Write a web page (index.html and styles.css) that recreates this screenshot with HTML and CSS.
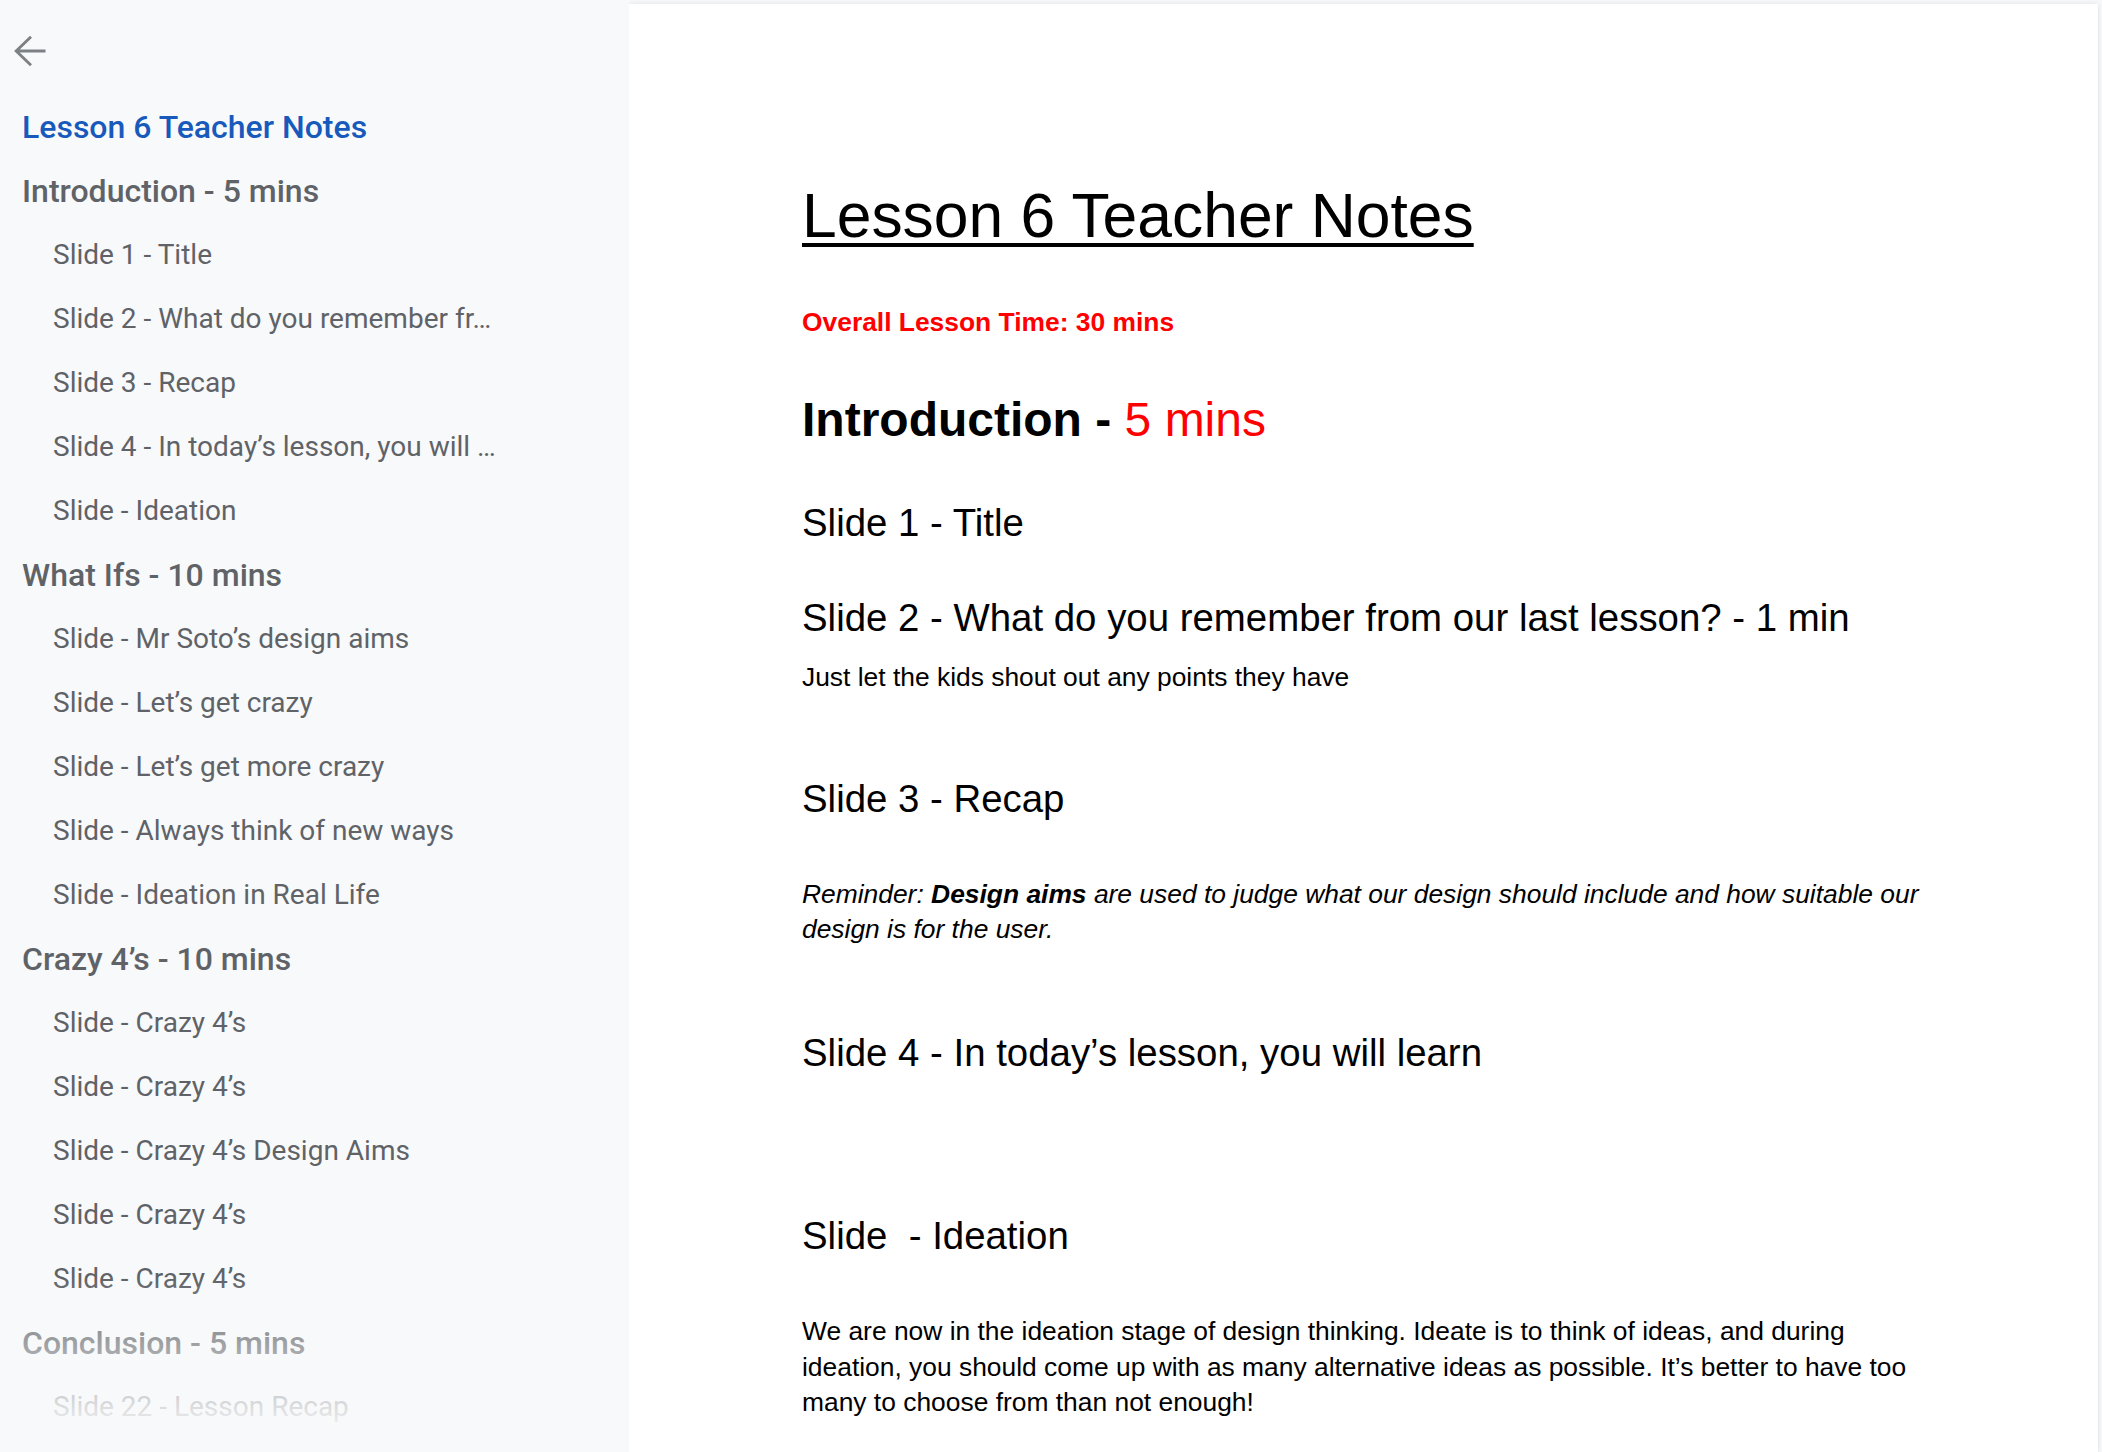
FILE: index.html
```html
<!DOCTYPE html>
<html lang="en">
<head>
<meta charset="utf-8">
<title>Lesson 6 Teacher Notes</title>
<link rel="stylesheet" href="styles.css">
</head>
<body>
<div class="app">
  <aside class="sidebar">
    <div class="back">
      <svg class="back-icon" width="32" height="32" viewBox="0 0 32 32" aria-hidden="true">
        <path d="M17 1.8 L2.2 16 L17 30.2 M2.2 16 H31.5" fill="none" stroke="#7d8186" stroke-width="2.9" stroke-linejoin="miter"/>
      </svg>
    </div>
    <nav class="toc">
      <div class="toc-row toc-title">Lesson 6 Teacher Notes</div>
      <div class="toc-row toc-head">Introduction - 5 mins</div>
      <div class="toc-row toc-item">Slide 1 - Title</div>
      <div class="toc-row toc-item">Slide 2 - What do you remember fr…</div>
      <div class="toc-row toc-item">Slide 3 - Recap</div>
      <div class="toc-row toc-item">Slide 4 - In today’s lesson, you will …</div>
      <div class="toc-row toc-item">Slide - Ideation</div>
      <div class="toc-row toc-head">What Ifs - 10 mins</div>
      <div class="toc-row toc-item">Slide - Mr Soto’s design aims</div>
      <div class="toc-row toc-item">Slide - Let’s get crazy</div>
      <div class="toc-row toc-item">Slide - Let’s get more crazy</div>
      <div class="toc-row toc-item">Slide - Always think of new ways</div>
      <div class="toc-row toc-item">Slide - Ideation in Real Life</div>
      <div class="toc-row toc-head">Crazy 4’s - 10 mins</div>
      <div class="toc-row toc-item">Slide - Crazy 4’s</div>
      <div class="toc-row toc-item">Slide - Crazy 4’s</div>
      <div class="toc-row toc-item">Slide - Crazy 4’s Design Aims</div>
      <div class="toc-row toc-item">Slide - Crazy 4’s</div>
      <div class="toc-row toc-item">Slide - Crazy 4’s</div>
      <div class="toc-row toc-head">Conclusion - 5 mins</div>
      <div class="toc-row toc-item">Slide 22 - Lesson Recap</div>
    </nav>
    <div class="fade"></div>
  </aside>

  <main class="page">
    <h1 class="doc-title">Lesson 6 Teacher Notes</h1>
    <p class="overall">Overall Lesson Time: 30 mins</p>
    <h2 class="h1"><b>Introduction - </b><span class="red">5 mins</span></h2>
    <h3 class="h2 s1">Slide 1 - Title</h3>
    <h3 class="h2 s2">Slide 2 - What do you remember from our last lesson? - 1 min</h3>
    <p class="body-text just">Just let the kids shout out any points they have</p>
    <h3 class="h2 s3">Slide 3 - Recap</h3>
    <p class="body-text reminder"><i>Reminder: <b>Design aims</b> are used to judge what our design should include and how suitable our design is for the user.</i></p>
    <h3 class="h2 s4">Slide 4 - In today’s lesson, you will learn</h3>
    <h3 class="h2 s5">Slide&nbsp; - Ideation</h3>
    <p class="body-text ideate">We are now in the ideation stage of design thinking. Ideate is to think of ideas, and during ideation, you should come up with as many alternative ideas as possible. It’s better to have too many to choose from than not enough!</p>
  </main>
</div>
</body>
</html>
```

FILE: styles.css
```css
html, body {
  margin: 0;
  padding: 0;
}

body {
  background: #f8f9fa;
  width: 2102px;
  height: 1452px;
  overflow: hidden;
}

.app {
  display: flex;
  height: 1452px;
}

/* ---------- Sidebar / outline ---------- */
.sidebar {
  position: relative;
  width: 629px;
  flex: 0 0 629px;
  background: #f8f9fa;
  font-family: Roboto, "Noto Sans", sans-serif;
  overflow: hidden;
}

.back {
  height: 95px;
  box-sizing: border-box;
  padding: 35px 0 0 14px;
}

.back-icon {
  display: block;
}

.toc {
  display: flex;
  flex-direction: column;
}

.toc-row {
  height: 64px;
  line-height: 64px;
  white-space: nowrap;
  overflow: hidden;
  color: #5f6368;
}

.toc-title {
  padding-left: 22px;
  font-size: 32px;
  font-weight: 500;
  color: #185abc;
}

.toc-head {
  padding-left: 22px;
  font-size: 32px;
  font-weight: 500;
}

.toc-item {
  padding-left: 53px;
  font-size: 28px;
  font-weight: 400;
}

.fade {
  position: absolute;
  left: 0;
  right: 0;
  bottom: 0;
  height: 175px;
  background: linear-gradient(to bottom, rgba(248, 249, 250, 0) 0%, rgba(248, 249, 250, 1) 92%);
  pointer-events: none;
}

/* ---------- Document page ---------- */
.page {
  flex: 1;
  margin: 4px 4px 0 0;
  background: #ffffff;
  box-shadow: 0 0 6px rgba(60, 64, 67, 0.12), 0 1px 2px rgba(60, 64, 67, 0.08);
  padding: 172px 172px 0 173px;
  font-family: "Liberation Sans", Arial, sans-serif;
  color: #000000;
  overflow: hidden;
}

.page h1, .page h2, .page h3, .page p {
  margin: 0;
  font-weight: 400;
}

.doc-title {
  font-size: 62.4px;
  line-height: 80px;
  text-decoration: underline;
  text-decoration-thickness: 4px;
  text-underline-offset: 6px;
}

.overall {
  margin-top: 49px !important;
  font-size: 26.4px;
  line-height: 35.5px;
  font-weight: 700 !important;
  color: #ff0000;
}

.h1 {
  margin-top: 48px !important;
  font-size: 48px;
  line-height: 62px;
}

.h1 b {
  font-weight: 700;
}

.red {
  color: #ff0000;
}

.h2 {
  font-size: 38.4px;
  line-height: 50px;
}

.body-text {
  font-size: 26.4px;
  line-height: 35.5px;
}

.body-text b {
  font-weight: 700;
}

.s1 { margin-top: 47px !important; }
.s2 { margin-top: 45px !important; }
.just { margin-top: 17px !important; }
.s3 { margin-top: 79px !important; }
.reminder { margin-top: 52.5px !important; }
.s4 { margin-top: 80.5px !important; }
.s5 { margin-top: 132.5px !important; }
.ideate { margin-top: 53.5px !important; }
```
